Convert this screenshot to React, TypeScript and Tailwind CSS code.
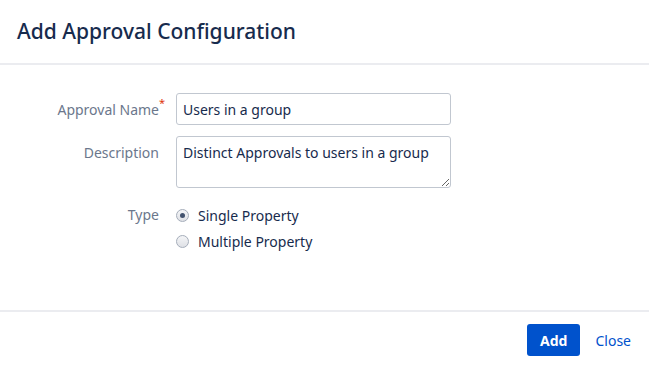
import React from "react";

const Radio: React.FC<{ checked?: boolean; label: string }> = ({ checked, label }) => (
  <label className="flex items-center h-[26px] gap-[9px] text-[14px] text-[#172b4d]">
    <span className="relative w-[13px] h-[13px] rounded-full border border-[#a5adba] bg-gradient-to-b from-[#f4f5f7] to-[#dfe1e6] flex items-center justify-center">
      {checked && <span className="w-[5px] h-[5px] rounded-full bg-[#42526e]"></span>}
    </span>
    {label}
  </label>
);

export default function App() {
  return (
    <div
      className="w-[649px] h-[367px] bg-white flex flex-col"
      style={{ fontFamily: '"Noto Sans", "Open Sans", sans-serif' }}
    >
      {/* Header */}
      <div className="h-[65px] px-[17px] flex items-center border-b-2 border-[#ebecf0]">
        <h2 className="text-[21px] text-[#172b4d] font-medium">Add Approval Configuration</h2>
      </div>

      {/* Body */}
      <div className="flex-1 pt-[28px] flex flex-col gap-[11px]">
        <div className="flex items-start">
          <div className="w-[159px] text-right text-[14px] text-[#6b778c] pt-[6px] relative">
            Approval Name
            <span className="absolute -right-[6px] top-[2px] text-[#de350b] text-[11px]">*</span>
          </div>
          <input
            className="ml-[17px] w-[275px] h-[32px] border border-[#c1c7d0] rounded-[3px] px-[6px] text-[14px] text-[#172b4d] outline-none"
            defaultValue="Users in a group"
            style={{ fontFamily: "inherit" }}
          />
        </div>
        <div className="flex items-start">
          <div className="w-[159px] text-right text-[14px] text-[#6b778c] pt-[6px]">Description</div>
          <textarea
            className="ml-[17px] w-[275px] h-[52px] border border-[#c1c7d0] rounded-[3px] px-[6px] py-[5px] text-[14px] text-[#172b4d] outline-none resize"
            defaultValue="Distinct Approvals to users in a group"
            style={{ fontFamily: "inherit" }}
          />
        </div>
        <div className="flex items-start pt-[3px]">
          <div className="w-[159px] text-right text-[14px] text-[#6b778c] leading-[26px]">Type</div>
          <div className="ml-[17px] flex flex-col">
            <Radio checked label="Single Property" />
            <Radio label="Multiple Property" />
          </div>
        </div>
      </div>

      {/* Footer */}
      <div className="h-[57px] border-t-2 border-[#ebecf0] flex items-start justify-end pt-[12px] pr-[18px] gap-[15px]">
        <button className="h-[32px] px-[13px] rounded-[3px] bg-[#0052cc] text-white text-[14px] font-bold">Add</button>
        <a className="h-[32px] flex items-center text-[14px] text-[#0052cc]">Close</a>
      </div>
    </div>
  );
}
